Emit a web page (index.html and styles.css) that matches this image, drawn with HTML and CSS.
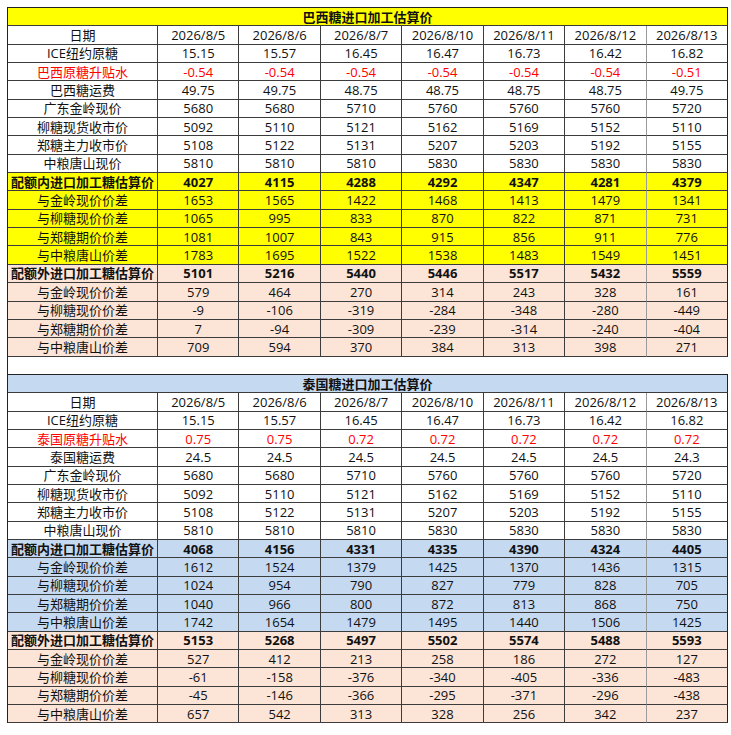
FILE: index.html
```html
<!DOCTYPE html>
<html lang="zh-CN">
<head>
<meta charset="utf-8">
<title>进口加工糖估算价</title>
<link rel="stylesheet" href="styles.css">
</head>
<body>
<div class="sheet">
  <div class="grid">
    <div class="row row-yellow"><div class="c title">巴西糖进口加工估算价</div></div>
    <div class="row"><div class="c">日期</div><div class="c">2026/8/5</div><div class="c">2026/8/6</div><div class="c">2026/8/7</div><div class="c">2026/8/10</div><div class="c">2026/8/11</div><div class="c">2026/8/12</div><div class="c">2026/8/13</div></div>
    <div class="row"><div class="c">ICE纽约原糖</div><div class="c">15.15</div><div class="c">15.57</div><div class="c">16.45</div><div class="c">16.47</div><div class="c">16.73</div><div class="c">16.42</div><div class="c">16.82</div></div>
    <div class="row row-red"><div class="c">巴西原糖升贴水</div><div class="c">-0.54</div><div class="c">-0.54</div><div class="c">-0.54</div><div class="c">-0.54</div><div class="c">-0.54</div><div class="c">-0.54</div><div class="c">-0.51</div></div>
    <div class="row"><div class="c">巴西糖运费</div><div class="c">49.75</div><div class="c">49.75</div><div class="c">48.75</div><div class="c">48.75</div><div class="c">48.75</div><div class="c">48.75</div><div class="c">49.75</div></div>
    <div class="row"><div class="c">广东金岭现价</div><div class="c">5680</div><div class="c">5680</div><div class="c">5710</div><div class="c">5760</div><div class="c">5760</div><div class="c">5760</div><div class="c">5720</div></div>
    <div class="row"><div class="c">柳糖现货收市价</div><div class="c">5092</div><div class="c">5110</div><div class="c">5121</div><div class="c">5162</div><div class="c">5169</div><div class="c">5152</div><div class="c">5110</div></div>
    <div class="row"><div class="c">郑糖主力收市价</div><div class="c">5108</div><div class="c">5122</div><div class="c">5131</div><div class="c">5207</div><div class="c">5203</div><div class="c">5192</div><div class="c">5155</div></div>
    <div class="row"><div class="c">中粮唐山现价</div><div class="c">5810</div><div class="c">5810</div><div class="c">5810</div><div class="c">5830</div><div class="c">5830</div><div class="c">5830</div><div class="c">5830</div></div>
    <div class="row row-yellow row-bold"><div class="c">配额内进口加工糖估算价</div><div class="c">4027</div><div class="c">4115</div><div class="c">4288</div><div class="c">4292</div><div class="c">4347</div><div class="c">4281</div><div class="c">4379</div></div>
    <div class="row row-yellow"><div class="c">与金岭现价价差</div><div class="c">1653</div><div class="c">1565</div><div class="c">1422</div><div class="c">1468</div><div class="c">1413</div><div class="c">1479</div><div class="c">1341</div></div>
    <div class="row row-yellow"><div class="c">与柳糖现价价差</div><div class="c">1065</div><div class="c">995</div><div class="c">833</div><div class="c">870</div><div class="c">822</div><div class="c">871</div><div class="c">731</div></div>
    <div class="row row-yellow"><div class="c">与郑糖期价价差</div><div class="c">1081</div><div class="c">1007</div><div class="c">843</div><div class="c">915</div><div class="c">856</div><div class="c">911</div><div class="c">776</div></div>
    <div class="row row-yellow"><div class="c">与中粮唐山价差</div><div class="c">1783</div><div class="c">1695</div><div class="c">1522</div><div class="c">1538</div><div class="c">1483</div><div class="c">1549</div><div class="c">1451</div></div>
    <div class="row row-peach row-bold"><div class="c">配额外进口加工糖估算价</div><div class="c">5101</div><div class="c">5216</div><div class="c">5440</div><div class="c">5446</div><div class="c">5517</div><div class="c">5432</div><div class="c">5559</div></div>
    <div class="row row-peach"><div class="c">与金岭现价价差</div><div class="c">579</div><div class="c">464</div><div class="c">270</div><div class="c">314</div><div class="c">243</div><div class="c">328</div><div class="c">161</div></div>
    <div class="row row-peach"><div class="c">与柳糖现价价差</div><div class="c">-9</div><div class="c">-106</div><div class="c">-319</div><div class="c">-284</div><div class="c">-348</div><div class="c">-280</div><div class="c">-449</div></div>
    <div class="row row-peach"><div class="c">与郑糖期价价差</div><div class="c">7</div><div class="c">-94</div><div class="c">-309</div><div class="c">-239</div><div class="c">-314</div><div class="c">-240</div><div class="c">-404</div></div>
    <div class="row row-peach"><div class="c">与中粮唐山价差</div><div class="c">709</div><div class="c">594</div><div class="c">370</div><div class="c">384</div><div class="c">313</div><div class="c">398</div><div class="c">271</div></div>
  </div>
  <div class="spacer"></div>
  <div class="grid">
    <div class="row row-blue"><div class="c title">泰国糖进口加工估算价</div></div>
    <div class="row"><div class="c">日期</div><div class="c">2026/8/5</div><div class="c">2026/8/6</div><div class="c">2026/8/7</div><div class="c">2026/8/10</div><div class="c">2026/8/11</div><div class="c">2026/8/12</div><div class="c">2026/8/13</div></div>
    <div class="row"><div class="c">ICE纽约原糖</div><div class="c">15.15</div><div class="c">15.57</div><div class="c">16.45</div><div class="c">16.47</div><div class="c">16.73</div><div class="c">16.42</div><div class="c">16.82</div></div>
    <div class="row row-red"><div class="c">泰国原糖升贴水</div><div class="c">0.75</div><div class="c">0.75</div><div class="c">0.72</div><div class="c">0.72</div><div class="c">0.72</div><div class="c">0.72</div><div class="c">0.72</div></div>
    <div class="row"><div class="c">泰国糖运费</div><div class="c">24.5</div><div class="c">24.5</div><div class="c">24.5</div><div class="c">24.5</div><div class="c">24.5</div><div class="c">24.5</div><div class="c">24.3</div></div>
    <div class="row"><div class="c">广东金岭现价</div><div class="c">5680</div><div class="c">5680</div><div class="c">5710</div><div class="c">5760</div><div class="c">5760</div><div class="c">5760</div><div class="c">5720</div></div>
    <div class="row"><div class="c">柳糖现货收市价</div><div class="c">5092</div><div class="c">5110</div><div class="c">5121</div><div class="c">5162</div><div class="c">5169</div><div class="c">5152</div><div class="c">5110</div></div>
    <div class="row"><div class="c">郑糖主力收市价</div><div class="c">5108</div><div class="c">5122</div><div class="c">5131</div><div class="c">5207</div><div class="c">5203</div><div class="c">5192</div><div class="c">5155</div></div>
    <div class="row"><div class="c">中粮唐山现价</div><div class="c">5810</div><div class="c">5810</div><div class="c">5810</div><div class="c">5830</div><div class="c">5830</div><div class="c">5830</div><div class="c">5830</div></div>
    <div class="row row-blue row-bold"><div class="c">配额内进口加工糖估算价</div><div class="c">4068</div><div class="c">4156</div><div class="c">4331</div><div class="c">4335</div><div class="c">4390</div><div class="c">4324</div><div class="c">4405</div></div>
    <div class="row row-blue"><div class="c">与金岭现价价差</div><div class="c">1612</div><div class="c">1524</div><div class="c">1379</div><div class="c">1425</div><div class="c">1370</div><div class="c">1436</div><div class="c">1315</div></div>
    <div class="row row-blue"><div class="c">与柳糖现价价差</div><div class="c">1024</div><div class="c">954</div><div class="c">790</div><div class="c">827</div><div class="c">779</div><div class="c">828</div><div class="c">705</div></div>
    <div class="row row-blue"><div class="c">与郑糖期价价差</div><div class="c">1040</div><div class="c">966</div><div class="c">800</div><div class="c">872</div><div class="c">813</div><div class="c">868</div><div class="c">750</div></div>
    <div class="row row-blue"><div class="c">与中粮唐山价差</div><div class="c">1742</div><div class="c">1654</div><div class="c">1479</div><div class="c">1495</div><div class="c">1440</div><div class="c">1506</div><div class="c">1425</div></div>
    <div class="row row-peach row-bold"><div class="c">配额外进口加工糖估算价</div><div class="c">5153</div><div class="c">5268</div><div class="c">5497</div><div class="c">5502</div><div class="c">5574</div><div class="c">5488</div><div class="c">5593</div></div>
    <div class="row row-peach"><div class="c">与金岭现价价差</div><div class="c">527</div><div class="c">412</div><div class="c">213</div><div class="c">258</div><div class="c">186</div><div class="c">272</div><div class="c">127</div></div>
    <div class="row row-peach"><div class="c">与柳糖现价价差</div><div class="c">-61</div><div class="c">-158</div><div class="c">-376</div><div class="c">-340</div><div class="c">-405</div><div class="c">-336</div><div class="c">-483</div></div>
    <div class="row row-peach"><div class="c">与郑糖期价价差</div><div class="c">-45</div><div class="c">-146</div><div class="c">-366</div><div class="c">-295</div><div class="c">-371</div><div class="c">-296</div><div class="c">-438</div></div>
    <div class="row row-peach"><div class="c">与中粮唐山价差</div><div class="c">657</div><div class="c">542</div><div class="c">313</div><div class="c">328</div><div class="c">256</div><div class="c">342</div><div class="c">237</div></div>
  </div>
</div>
</body>
</html>
```

FILE: styles.css
```css
html, body {
  margin: 0;
  padding: 0;
  background: #ffffff;
}

body {
  font-family: "Open Sans", "Noto Sans CJK SC", sans-serif;
  font-size: 13px;
  color: #111111;
}

.sheet {
  margin: 7px 0 0 7px;
  width: 721px;
}

.grid {
  display: grid;
  grid-template-columns: 150px repeat(7, 1fr);
  grid-auto-rows: 18.35px;
  width: 721px;
  box-sizing: border-box;
  border-top: 1px solid #222222;
  border-left: 1px solid #222222;
}

.row {
  display: contents;
}

.c {
  box-sizing: border-box;
  display: flex;
  align-items: center;
  justify-content: center;
  white-space: nowrap;
  line-height: 1;
  border-right: 1px solid #3c3c3c;
  border-bottom: 1px solid #3c3c3c;
  padding-top: 1px;
}

.row > .c:nth-child(7) {
  border-right-color: #9a9a9a;
}

.row > .c:last-child {
  border-right-color: #222222;
}

.c.title {
  grid-column: 1 / -1;
  font-weight: bold;
  border-right-color: #222222;
}

.row-bold > .c {
  font-weight: bold;
}

.row-red > .c {
  color: #ff0000;
}

.row-yellow > .c {
  background: #ffff00;
}

.row-peach > .c {
  background: #fce4d6;
}

.row-blue > .c {
  background: #c5d9f1;
}

.spacer {
  height: 17.35px;
  border-left: 1px solid #222222;
}
```
